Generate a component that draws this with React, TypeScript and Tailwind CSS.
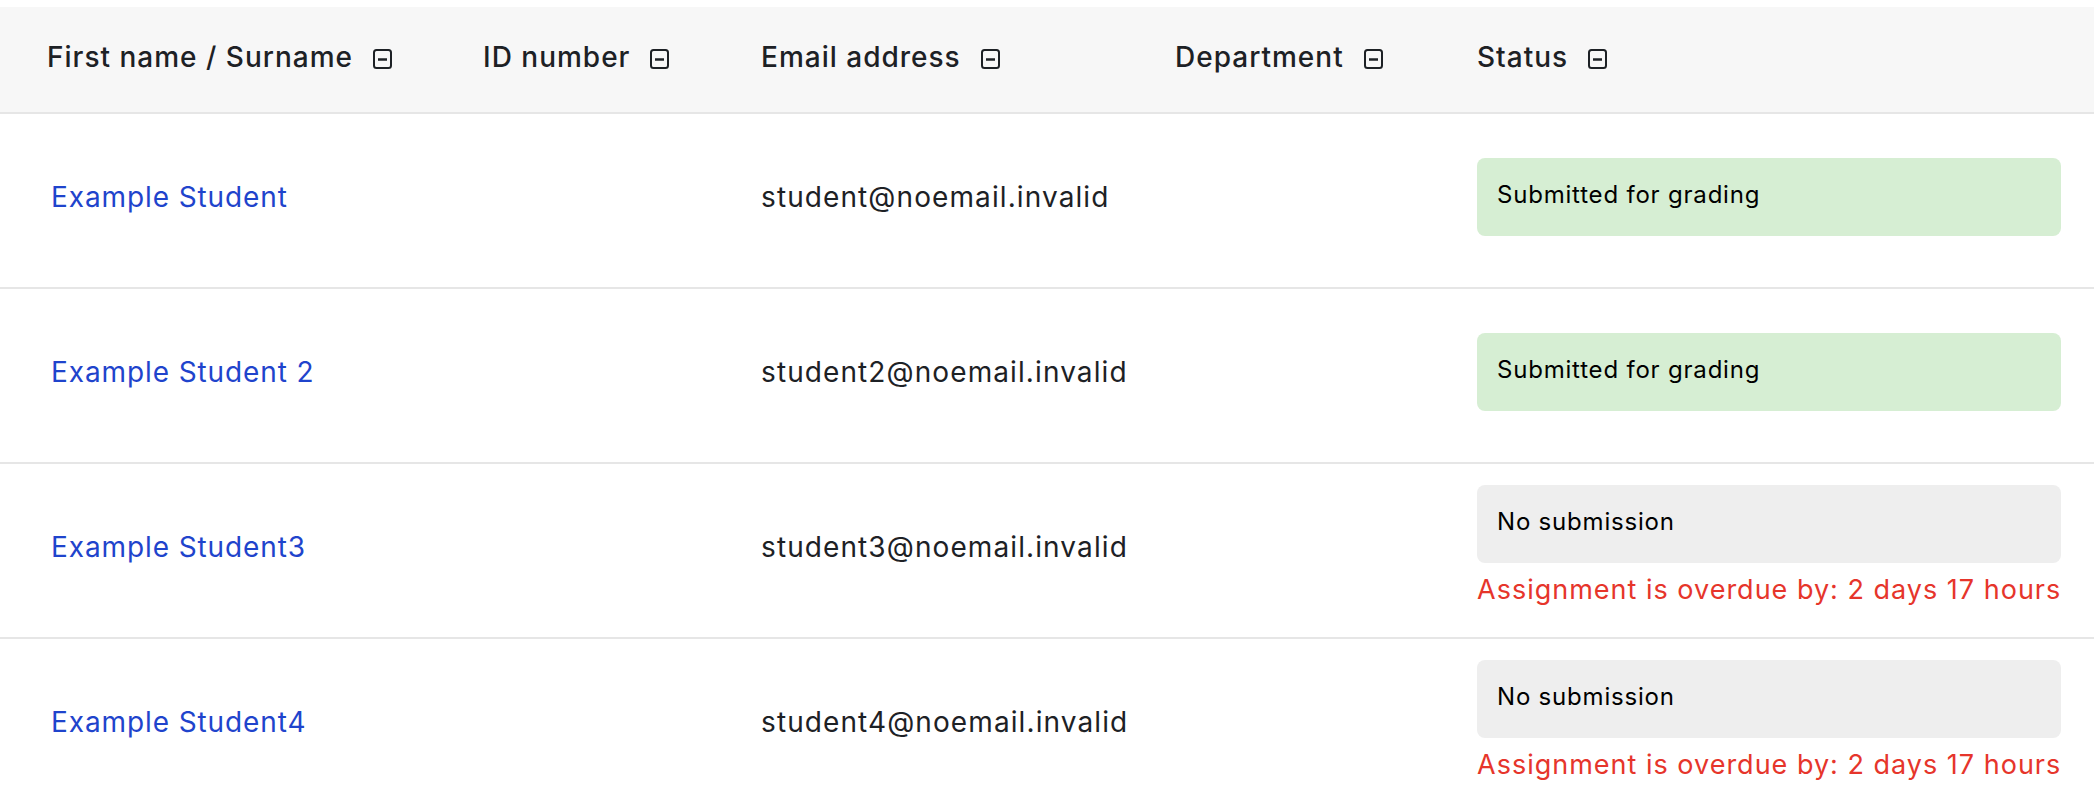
import React from "react";

type Student = {
  name: string;
  email: string;
  status: "submitted" | "none";
};

const students: Student[] = [
  { name: "Example Student", email: "student@noemail.invalid", status: "submitted" },
  { name: "Example Student 2", email: "student2@noemail.invalid", status: "submitted" },
  { name: "Example Student3", email: "student3@noemail.invalid", status: "none" },
  { name: "Example Student4", email: "student4@noemail.invalid", status: "none" }
];

const columns = ["First name / Surname", "ID number", "Email address", "Department", "Status"];

const grid = "grid grid-cols-[436px_278px_414px_302px_1fr] pl-[35px] pr-[21px]";

// collapse column toggle (square with a minus)
const CollapseIcon = () => (
  <svg width="19" height="20" viewBox="0 0 19 20" fill="none" className="ml-[20px] mt-[4px] shrink-0">
    <rect x="1" y="1" width="17" height="18" rx="2.5" stroke="#1d2125" strokeWidth="2" />
    <line x1="5" y1="10.5" x2="14" y2="10.5" stroke="#1d2125" strokeWidth="2.5" />
  </svg>
);

export default function App() {
  return (
    <div className="w-[2094px] h-[802px] overflow-hidden bg-white pt-[7px] font-['Inter',sans-serif] text-[#1d2125]">
      <div className={`${grid} h-[107px] pb-[6px] bg-[#f7f7f7] border-b-2 border-[#e6e6e6] items-center`}>
        {columns.map((col) => (
          <div key={col} className="flex items-center px-[12px] text-[28px] font-medium tracking-[1px]">
            <span>{col}</span>
            <CollapseIcon />
          </div>
        ))}
      </div>
      {students.map((s) => (
        <div key={s.name} className={`${grid} h-[175px] pb-[8px] border-b-2 border-[#e6e6e6] items-center`}>
          <div className="px-[12px] pl-[16px]">
            <a href="#" className="text-[28px] tracking-[0.9px] text-[#1f44cc]">
              {s.name}
            </a>
          </div>
          <div className="px-[12px]" />
          <div className="px-[12px] text-[28px] tracking-[1.1px]">{s.email}</div>
          <div className="px-[12px]" />
          <div className="px-[12px]">
            {s.status === "submitted" ? (
              <div className="h-[78px] rounded-[8px] bg-[#d6eed3] px-[20px] flex items-center pb-[4px] text-[24px] tracking-[0.8px] text-black">
                Submitted for grading
              </div>
            ) : (
              <div className="flex flex-col gap-[9px]">
                <div className="h-[78px] rounded-[8px] bg-[#eeeeee] px-[20px] flex items-center pb-[4px] text-[24px] tracking-[0.8px] text-black">
                  No submission
                </div>
                <div className="whitespace-nowrap text-[27px] tracking-[1px] text-[#e6352b] leading-[36px]">
                  Assignment is overdue by: 2 days 17 hours
                </div>
              </div>
            )}
          </div>
        </div>
      ))}
    </div>
  );
}
